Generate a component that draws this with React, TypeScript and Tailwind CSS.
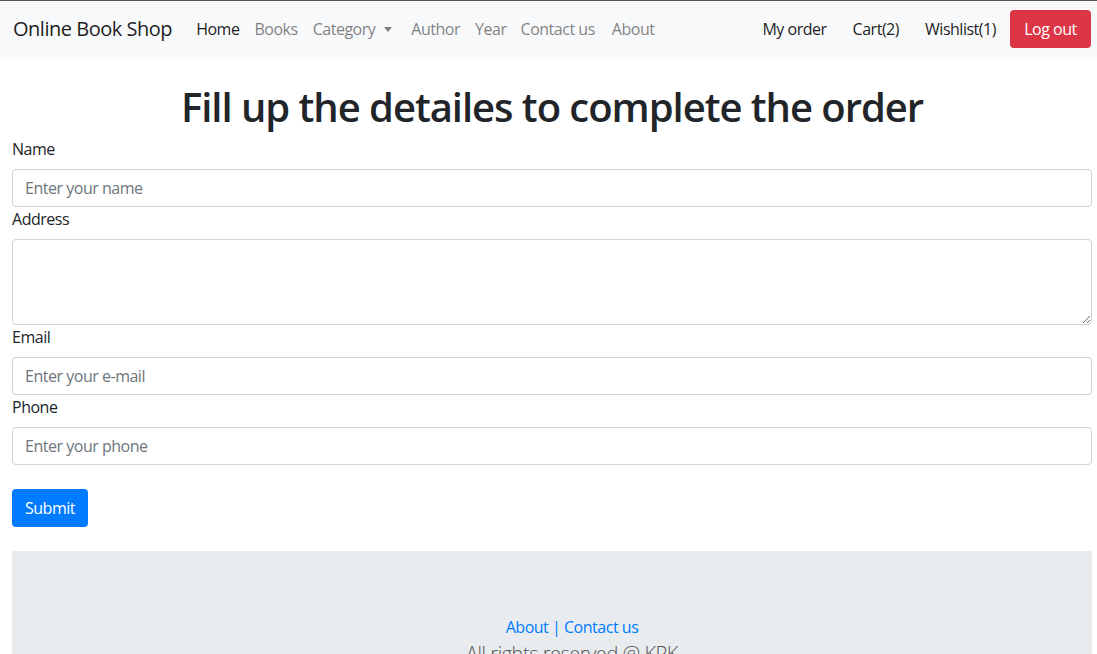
import React from "react";

export default function App() {
  return (
    <div className="min-h-screen bg-white text-[#212529] font-['Open_Sans',_'Noto_Sans',_sans-serif] tracking-[-0.03em]">
      <nav className="flex items-center h-[57px] border-t border-[#555] bg-[#f8f9fa] pl-[13px] pr-[6px] text-[16px]">
        <span className="text-[20px] text-[rgba(0,0,0,0.9)] mr-[16px]">Online Book Shop</span>
        <div className="flex items-center">
          <a className="px-[8px] text-[rgba(0,0,0,0.9)]">Home</a>
          <a className="pl-[7px] pr-[8px] text-[rgba(0,0,0,0.5)]">Books</a>
          <a className="pl-[7px] pr-[8px] text-[rgba(0,0,0,0.5)] flex items-center">
            Category
            <span className="ml-[9px] inline-block w-0 h-0 border-l-[4px] border-r-[4px] border-t-[5px] border-l-transparent border-r-transparent border-t-[rgba(0,0,0,0.5)]"></span>
          </a>
          <a className="pl-[11px] pr-[8px] text-[rgba(0,0,0,0.5)]">Author</a>
          <a className="pl-[7px] pr-[8px] text-[rgba(0,0,0,0.5)]">Year</a>
          <a className="pl-[6px] pr-[8px] text-[rgba(0,0,0,0.5)]">Contact us</a>
          <a className="pl-[9px] pr-[8px] text-[rgba(0,0,0,0.5)]">About</a>
        </div>
        <div className="ml-auto flex items-center">
          <a className="px-[13px] text-[rgba(0,0,0,0.9)]">My order</a>
          <a className="px-[13px] text-[rgba(0,0,0,0.9)]">Cart(2)</a>
          <a className="pl-[13px] pr-[14px] text-[rgba(0,0,0,0.9)]">Wishlist(1)</a>
          <button className="h-[38px] w-[81px] rounded-[4px] bg-[#dc3545] text-white text-[16px] tracking-[-0.03em]">Log out</button>
        </div>
      </nav>

      <div className="pl-[12px] pr-[5px]">
        <h1 className="mt-[26px] mb-[6px] text-center text-[40px] leading-[48px] font-semibold tracking-[-0.026em]">
          Fill up the detailes to complete the order
        </h1>
        <form className="flex flex-col text-[16px]">
          <label className="leading-[24px] mb-[8px]">Name</label>
          <input
            className="h-[38px] px-[12px] border border-[#ced4da] rounded-[4px] placeholder:text-[#6c757d] outline-none tracking-[-0.03em]"
            placeholder="Enter your name"
          />
          <label className="leading-[24px] mb-[8px]">Address</label>
          <textarea className="h-[86px] px-[12px] py-[6px] border border-[#ced4da] rounded-[4px] outline-none"></textarea>
          <label className="leading-[24px] mb-[8px]">Email</label>
          <input
            className="h-[38px] px-[12px] border border-[#ced4da] rounded-[4px] placeholder:text-[#6c757d] outline-none tracking-[-0.03em]"
            placeholder="Enter your e-mail"
          />
          <label className="leading-[24px] mb-[8px]">Phone</label>
          <input
            className="h-[38px] px-[12px] border border-[#ced4da] rounded-[4px] placeholder:text-[#6c757d] outline-none tracking-[-0.03em]"
            placeholder="Enter your phone"
          />
          <div className="mt-[24px]">
            <button type="button" className="h-[38px] w-[76px] rounded-[4px] bg-[#007bff] text-white text-[16px] tracking-[-0.03em]">
              Submit
            </button>
          </div>
        </form>
        <footer className="mt-[24px] bg-[#e9ecef] pt-[64px] pb-[40px] pl-[40px] text-center">
          <div className="leading-[24px] text-[16px] text-[#007bff]">
            <a>About</a> | <a>Contact us</a>
          </div>
          <div className="text-[20px] leading-[30px] text-[#555] font-light">All rights reserved @ KPK</div>
        </footer>
      </div>
    </div>
  );
}
